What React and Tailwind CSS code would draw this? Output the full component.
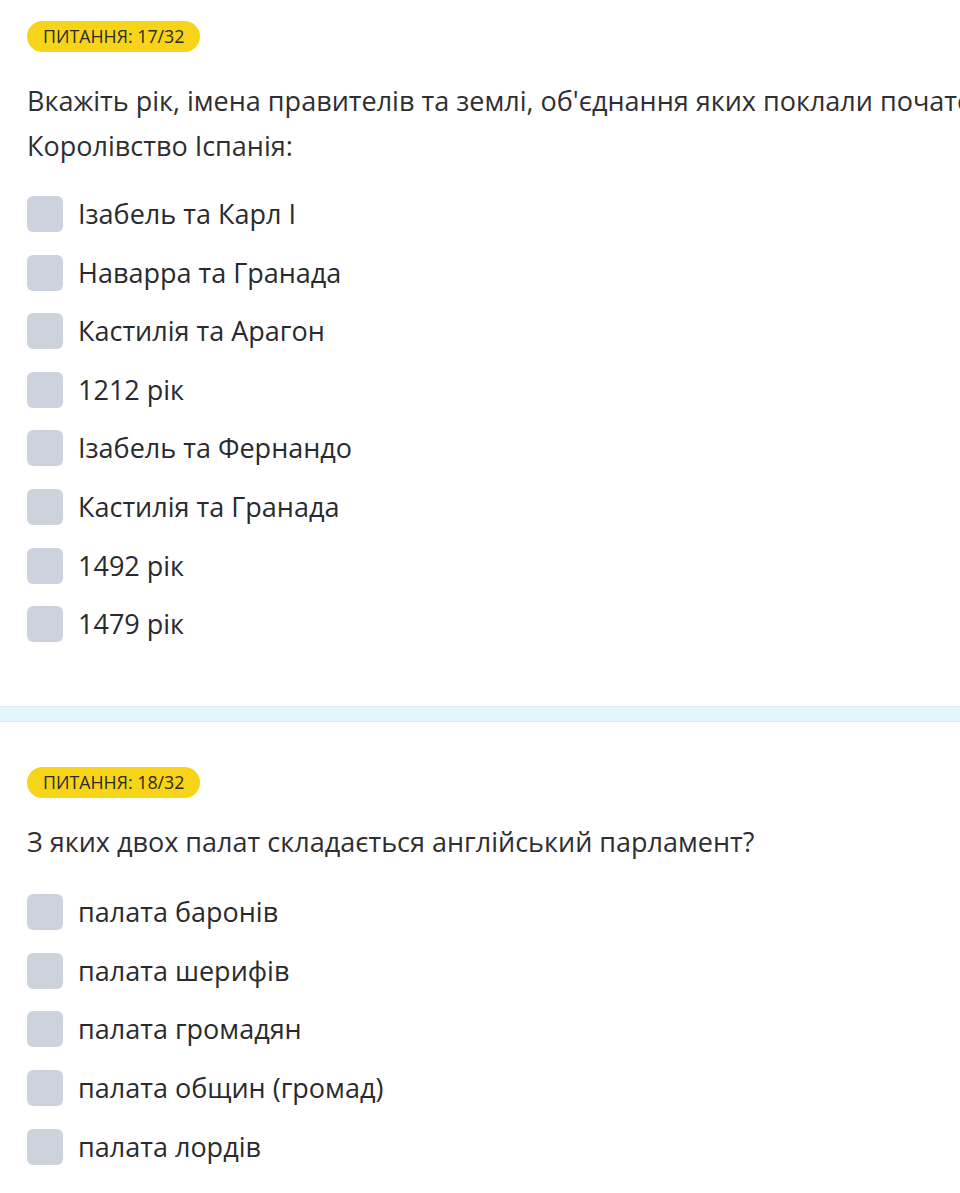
const questions = [
  {
    label: 'ПИТАННЯ: 17/32',
    lines: ['Вкажіть рік, імена правителів та землі, об\'єднання яких поклали початок державі', 'Королівство Іспанія:'],
    options: ['Ізабель та Карл І', 'Наварра та Гранада', 'Кастилія та Арагон', '1212 рік', 'Ізабель та Фернандо', 'Кастилія та Гранада', '1492 рік', '1479 рік'],
  },
  {
    label: 'ПИТАННЯ: 18/32',
    lines: ['З яких двох палат складається англійський парламент?'],
    options: ['палата баронів', 'палата шерифів', 'палата громадян', 'палата общин (громад)', 'палата лордів'],
  },
];

const Question = ({ q, gapTop, optTop }) => (
  <div className="px-[27px]">
    <span className="inline-block bg-[#f7d417] text-[#2b2b2b] text-[17.8px] leading-[31px] h-[31px] px-[16px] rounded-full">
      {q.label}
    </span>
    <div className={`${gapTop} text-[27px] leading-[45px] text-[#2e2e33] whitespace-nowrap`}>
      {q.lines.map((l) => (
        <div key={l}>{l}</div>
      ))}
    </div>
    <div className={`${optTop} flex flex-col gap-[22.6px]`}>
      {q.options.map((o) => (
        <label key={o} className="flex items-center gap-[15px] h-[36px]">
          <span className="w-[36px] h-[36px] rounded-[6px] bg-[#cdd3dc] shrink-0"></span>
          <span className="text-[27px] leading-[36px] text-[#2a2a2e]">{o}</span>
        </label>
      ))}
    </div>
  </div>
);

export default function App() {
  return (
    <div className="w-[960px] h-[1193px] overflow-hidden bg-white font-['Open_Sans',sans-serif]">
      <div className="pt-[21px]">
        <Question q={questions[0]} gapTop="mt-[26px]" optTop="mt-[28px]" />
      </div>
      <div className="mt-[64px] h-[16px] bg-[#e4f6fd] border-y border-[#d3eef9]"></div>
      <div className="pt-[45px]">
        <Question q={questions[1]} gapTop="mt-[21px]" optTop="mt-[30px]" />
      </div>
    </div>
  );
}
